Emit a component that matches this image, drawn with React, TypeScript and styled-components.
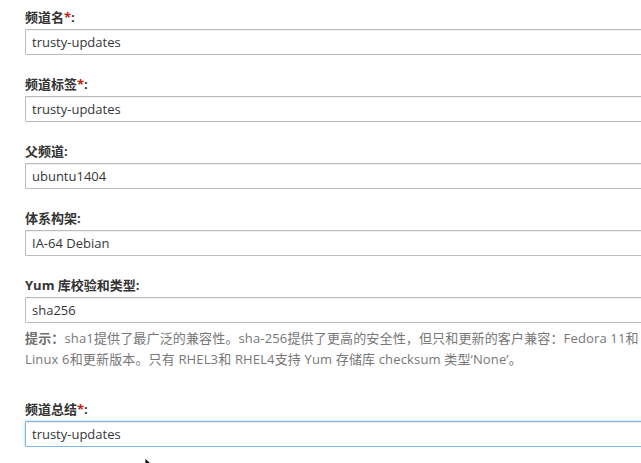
import React, { FC } from "react";
import styled, { createGlobalStyle } from "styled-components";

const GlobalStyle = createGlobalStyle`
    html, body {
        margin: 0;
        padding: 0;
        background: #fff;
        overflow: hidden;
    }
    body {
        font-family: "Open Sans", "Noto Sans CJK SC", sans-serif;
        font-size: 13px;
        color: #333;
    }
`

type Field = {
    label: string
    value: string
    required?: boolean
}

const fields: Field[] = [
    { label: '频道名', value: 'trusty-updates', required: true },
    { label: '频道标签', value: 'trusty-updates', required: true },
    { label: '父频道', value: 'ubuntu1404' },
    { label: '体系构架', value: 'IA-64 Debian' },
    { label: 'Yum 库校验和类型', value: 'sha256' },
]

const App: FC = () => {
    return (
        <>
            <GlobalStyle />
            <Form>
                {fields.map((f, i) => (
                    <Group key={i}>
                        <Label>
                            {f.label}
                            {f.required && <Star>*</Star>}:
                        </Label>
                        <Input readOnly value={f.value} />
                        {i === fields.length - 1 && (
                            <Hint>
                                <HintTitle>提示：</HintTitle>sha1提供了最广泛的兼容性。sha-256提供了更高的安全性，但只和更新的客户兼容：Fedora 11和
                                <br />
                                Linux 6和更新版本。只有 RHEL3和 RHEL4支持 Yum 存储库 checksum 类型‘None’。
                            </Hint>
                        )}
                    </Group>
                ))}
                <Group $spaced>
                    <Label>
                        频道总结<Star>*</Star>:
                    </Label>
                    <Input readOnly value="trusty-updates" $focused />
                </Group>
            </Form>
            <Pointer viewBox="0 0 10 14" width="10" height="14">
                <path d="M1 1 L1 11 L3.5 8.6 L5.5 13 L7 12.3 L5 8 L8.5 8 Z" fill="#111" stroke="#fff" strokeWidth="0.8" />
            </Pointer>
        </>
    )
}

const Form = styled.div`
    width: 900px;
    padding: 7px 0 0 25px;
    display: flex;
    flex-direction: column;
    gap: 19px;
`

const Group = styled.div<{ $spaced?: boolean }>`
    display: flex;
    flex-direction: column;
    margin-top: ${p => p.$spaced ? '10px' : '0'};
`

const Label = styled.label`
    font-weight: bold;
    line-height: 20px;
    height: 20px;
    margin-bottom: 2px;
    color: #333;
`

const Star = styled.span`
    color: #c9190b;
`

const Input = styled.input<{ $focused?: boolean }>`
    box-sizing: border-box;
    width: 860px;
    height: 26px;
    padding: 0 6px;
    font-family: "Open Sans", "Noto Sans CJK SC", sans-serif;
    font-size: 13px;
    color: #363636;
    background: #fff;
    border: 1px solid ${p => p.$focused ? '#7db7e8' : '#bbb'};
    border-radius: 1px;
    outline: none;
    box-shadow: ${p => p.$focused
        ? 'inset 0 1px 1px rgba(0,0,0,.075), 0 0 3px rgba(102,175,233,.6)'
        : 'inset 0 1px 1px rgba(0,0,0,.06)'};
`

const Hint = styled.div`
    margin-top: 5px;
    line-height: 21px;
    color: #777;
    white-space: nowrap;
    letter-spacing: 0.15px;
`

const HintTitle = styled.strong`
    font-weight: bold;
    color: #6f6f6f;
`

const Pointer = styled.svg`
    position: absolute;
    left: 144px;
    top: 457px;
`

export default App
